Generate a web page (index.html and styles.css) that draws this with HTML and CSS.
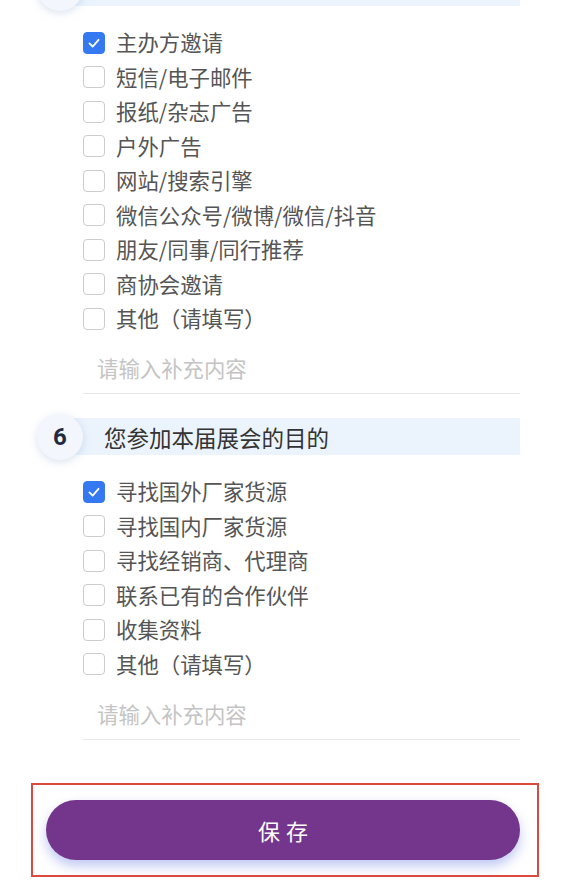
FILE: index.html
```html
<!DOCTYPE html>
<html lang="zh-CN">
<head>
<meta charset="utf-8">
<title>问卷</title>
<link rel="stylesheet" href="styles.css">
</head>
<body>
<div class="form">
  <section class="section">
    <div class="q-head">
      <div class="q-num"></div>
      <div class="q-band"></div>
    </div>
    <ul class="options">
      <li class="opt"><span class="box checked"><svg viewBox="0 0 22 22"><polyline points="6,11.5 9.5,15 16,7.5"/></svg></span><span class="label">主办方邀请</span></li>
      <li class="opt"><span class="box"></span><span class="label">短信/电子邮件</span></li>
      <li class="opt"><span class="box"></span><span class="label">报纸/杂志广告</span></li>
      <li class="opt"><span class="box"></span><span class="label">户外广告</span></li>
      <li class="opt"><span class="box"></span><span class="label">网站/搜索引擎</span></li>
      <li class="opt"><span class="box"></span><span class="label">微信公众号/微博/微信/抖音</span></li>
      <li class="opt"><span class="box"></span><span class="label">朋友/同事/同行推荐</span></li>
      <li class="opt"><span class="box"></span><span class="label">商协会邀请</span></li>
      <li class="opt"><span class="box"></span><span class="label">其他（请填写）</span></li>
    </ul>
    <div class="extra">请输入补充内容</div>
  </section>
  <section class="section">
    <div class="q-head">
      <div class="q-num">6</div>
      <div class="q-band">您参加本届展会的目的</div>
    </div>
    <ul class="options">
      <li class="opt"><span class="box checked"><svg viewBox="0 0 22 22"><polyline points="6,11.5 9.5,15 16,7.5"/></svg></span><span class="label">寻找国外厂家货源</span></li>
      <li class="opt"><span class="box"></span><span class="label">寻找国内厂家货源</span></li>
      <li class="opt"><span class="box"></span><span class="label">寻找经销商、代理商</span></li>
      <li class="opt"><span class="box"></span><span class="label">联系已有的合作伙伴</span></li>
      <li class="opt"><span class="box"></span><span class="label">收集资料</span></li>
      <li class="opt"><span class="box"></span><span class="label">其他（请填写）</span></li>
    </ul>
    <div class="extra">请输入补充内容</div>
  </section>
  <div class="save-wrap">
    <button class="save">保存</button>
  </div>
</div>
</body>
</html>
```
FILE: styles.css
```css
html, body {
  margin: 0;
  padding: 0;
  background: #ffffff;
}
body {
  font-family: "Noto Sans CJK SC", "Noto Sans", sans-serif;
  overflow: hidden;
}
.form {
  margin-top: -35.5px;
}
.section {
  padding: 0 42px 0 37px;
  margin-bottom: 19.5px;
}
.q-head {
  display: flex;
  align-items: center;
  height: 46px;
}
.q-num {
  position: relative;
  z-index: 1;
  flex: 0 0 46px;
  width: 46px;
  height: 46px;
  border-radius: 50%;
  background: #f3f7fd;
  box-shadow: 0 2px 9px rgba(120, 150, 200, 0.28);
  display: flex;
  align-items: center;
  justify-content: center;
  font-size: 24px;
  font-weight: 700;
  color: #1f2b46;
  font-family: "Roboto", "Noto Sans", sans-serif;
}
.q-band {
  flex: 1;
  margin-left: -23px;
  height: 37px;
  background: #ebf3fd;
  padding-left: 44px;
  display: flex;
  align-items: center;
  font-size: 22.5px;
  color: #333333;
  white-space: nowrap;
  overflow: hidden;
}
.options {
  list-style: none;
  margin: 15px 0 0 46px;
  padding: 0;
}
.opt {
  display: flex;
  align-items: center;
  height: 34.5px;
}
.box {
  flex: 0 0 22px;
  width: 22px;
  height: 22px;
  box-sizing: border-box;
  border: 1px solid #cccccc;
  border-radius: 4px;
  background: #fff;
  display: flex;
  align-items: center;
  justify-content: center;
}
.box.checked {
  background: #3479f1;
  border-color: #3479f1;
}
.box svg {
  width: 22px;
  height: 22px;
}
.box svg polyline {
  fill: none;
  stroke: #ffffff;
  stroke-width: 2;
  stroke-linecap: round;
  stroke-linejoin: round;
}
.label {
  margin-left: 11px;
  font-size: 21.4px;
  color: #555555;
  line-height: 1;
  margin-top: -2px;
}
.extra {
  margin-left: 46px;
  height: 58px;
  box-sizing: border-box;
  padding: 21px 0 0 14px;
  line-height: 22px;
  font-size: 21.4px;
  color: #c4c4c4;
  border-bottom: 1px solid #e8e8e8;
}
.save-wrap {
  margin: 43.5px 23px 0 31px;
  border: 2px solid #dc4a3f;
  padding: 15px 17px 15px 13px;
}
.save {
  display: block;
  width: 100%;
  height: 60px;
  border: none;
  border-radius: 30px;
  background: #74368c;
  color: #ffffff;
  font-family: "Noto Sans CJK SC", sans-serif;
  font-size: 22px;
  letter-spacing: 6px;
  text-indent: 6px;
  box-shadow: 0 6px 12px rgba(90, 110, 220, 0.38);
}
```
